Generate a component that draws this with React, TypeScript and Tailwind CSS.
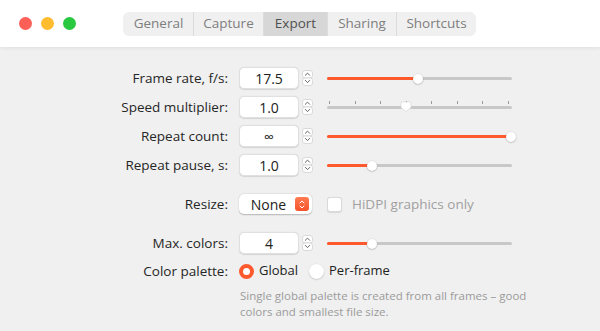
import React from "react";

const font = { fontFamily: '"Open Sans", "Noto Sans", sans-serif' };

function Stepper() {
  return (
    <svg width="11" height="16" viewBox="0 0 11 16" className="ml-[3px]">
      <rect x="0.5" y="0.5" width="10" height="7.5" rx="2.5" fill="#fff" stroke="#d0d0d0" strokeWidth="0.8" />
      <rect x="0.5" y="8" width="10" height="7.5" rx="2.5" fill="#fff" stroke="#d0d0d0" strokeWidth="0.8" />
      <path d="M3.3 5.3 L5.5 3.1 L7.7 5.3" fill="none" stroke="#555" strokeWidth="0.9" strokeLinecap="round" strokeLinejoin="round" />
      <path d="M3.3 10.4 L5.5 12.6 L7.7 10.4" fill="none" stroke="#555" strokeWidth="0.9" strokeLinecap="round" strokeLinejoin="round" />
    </svg>
  );
}

function NumberField({ value }: { value: string }) {
  return (
    <div className="flex items-center">
      <div className="w-[60px] h-[22px] bg-white rounded-[5px] border border-[#e0e0e0] shadow-[0_0.5px_1px_rgba(0,0,0,0.12)] flex items-center justify-center text-[14px] text-[#222]">
        {value}
      </div>
      <Stepper />
    </div>
  );
}

function Slider({ pct, ticks }: { pct: number; ticks?: boolean }) {
  const w = 185;
  const pos = Math.min(pct * w, w - 1);
  return (
    <div className="relative ml-[14px] w-[185px] h-[22px]">
      {ticks && (
        <div className="absolute left-[2px] right-[3px] top-[5px] flex justify-between">
          {Array.from({ length: 8 }).map((_, i) => (
            <div key={i} className="w-px h-[3px] bg-[#9a9a9a]" />
          ))}
        </div>
      )}
      <div className="absolute left-0 right-0 top-[10px] h-[3px] rounded-full bg-[#c8c8c8]" />
      {!ticks && (
        <div className="absolute left-0 top-[10px] h-[3px] rounded-full bg-[#ff5a2e]" style={{ width: pos }} />
      )}
      {ticks ? (
        <svg className="absolute top-[5px]" style={{ left: pos - 6 }} width="12" height="12" viewBox="0 0 12 12">
          <path d="M2 1 H10 Q11 1 11 2 V6.5 L6 10.5 L1 6.5 V2 Q1 1 2 1 Z" fill="#fff" stroke="#d4d4d4" strokeWidth="0.6" />
        </svg>
      ) : (
        <div
          className="absolute top-[6.5px] w-[10px] h-[10px] rounded-full bg-white shadow-[0_0.5px_1.5px_rgba(0,0,0,0.35)]"
          style={{ left: pos - 5 }}
        />
      )}
    </div>
  );
}

function Label({ children }: { children: React.ReactNode }) {
  return <div className="w-[228px] pr-0 text-right text-[13.5px] text-[#262626] mr-[11px]">{children}</div>;
}

export default function App() {
  const tabs = [
    { t: "General", w: 70 },
    { t: "Capture", w: 70 },
    { t: "Export", w: 64 },
    { t: "Sharing", w: 69 },
    { t: "Shortcuts", w: 80 },
  ];
  return (
    <div className="w-[600px] h-[331px] bg-[#f0f0f0] overflow-hidden flex flex-col" style={font}>
      <div className="h-[47px] bg-white relative z-10 shadow-[0_1px_4px_rgba(0,0,0,0.08)] flex items-center">
        <div className="flex items-center gap-[9px] ml-[19px]">
          <div className="w-[13px] h-[13px] rounded-full bg-[#fe5f57]" />
          <div className="w-[13px] h-[13px] rounded-full bg-[#febc2e]" />
          <div className="w-[13px] h-[13px] rounded-full bg-[#28c840]" />
        </div>
        <div className="ml-[47px] flex h-[24px] rounded-[6px] bg-[#f0f0f0] overflow-hidden">
          {tabs.map((tab, i) => (
            <div
              key={tab.t}
              className={
                "flex items-center justify-center text-[13.5px] border-l " +
                (i === 0 ? "border-transparent " : "border-[#dcdcdc] ") +
                (tab.t === "Export" ? "bg-[#d7d7d7] text-[#505050]" : "text-[#7e7e7e]")
              }
              style={{ width: tab.w }}
            >
              {tab.t}
            </div>
          ))}
        </div>
      </div>

      <div className="flex flex-col pt-[20px]">
        <div className="flex flex-col gap-[7px]">
          <div className="flex items-center h-[22px]">
            <Label>Frame rate, f/s:</Label>
            <NumberField value="17.5" />
            <Slider pct={0.492} />
          </div>
          <div className="flex items-center h-[22px]">
            <Label>Speed multiplier:</Label>
            <NumberField value="1.0" />
            <Slider pct={0.427} ticks />
          </div>
          <div className="flex items-center h-[22px]">
            <Label>Repeat count:</Label>
            <NumberField value="∞" />
            <Slider pct={1} />
          </div>
          <div className="flex items-center h-[22px]">
            <Label>Repeat pause, s:</Label>
            <NumberField value="1.0" />
            <Slider pct={0.243} />
          </div>
        </div>

        <div className="flex items-center h-[20px] mt-[18px]">
          <Label>Resize:</Label>
          <div className="w-[73px] h-[20px] bg-white rounded-[5px] shadow-[0_0.5px_1.5px_rgba(0,0,0,0.25)] flex items-center">
            <div className="flex-1 text-center text-[14px] text-[#222] pl-[3px]">None</div>
            <div className="w-[14px] h-[14px] mr-[3px] rounded-[3px] bg-gradient-to-b from-[#ff7a50] to-[#f5522a] flex items-center justify-center">
              <svg width="8" height="11" viewBox="0 0 8 11">
                <path d="M2 4 L4 2 L6 4" fill="none" stroke="#fff" strokeWidth="1" strokeLinecap="round" strokeLinejoin="round" />
                <path d="M2 7 L4 9 L6 7" fill="none" stroke="#fff" strokeWidth="1" strokeLinecap="round" strokeLinejoin="round" />
              </svg>
            </div>
          </div>
          <div className="ml-[15px] w-[15px] h-[15px] bg-white rounded-[3px] border border-[#dadada] shadow-[0_0.5px_1px_rgba(0,0,0,0.1)]" />
          <div className="ml-[10px] text-[13.5px] text-[#a0a0a0]">HiDPI graphics only</div>
        </div>

        <div className="flex items-center h-[22px] mt-[18px]">
          <Label>Max. colors:</Label>
          <NumberField value="4" />
          <Slider pct={0.243} />
        </div>

        <div className="flex items-center h-[18px] mt-[8px]">
          <Label>Color palette:</Label>
          <div className="w-[15px] h-[15px] rounded-full border-[4px] border-[#ff5a2e] bg-white" />
          <div className="ml-[5px] text-[13px] text-[#222]">Global</div>
          <div className="ml-[11px] w-[15px] h-[15px] rounded-full bg-white shadow-[0_0.5px_1.5px_rgba(0,0,0,0.25)]" />
          <div className="ml-[5px] text-[13px] text-[#222]">Per-frame</div>
        </div>

        <div className="ml-[240px] mt-[8px] w-[300px] text-[11.5px] leading-[16px] text-[#9b9b9b]">
          Single global palette is created from all frames – good colors and smallest file size.
        </div>
      </div>
    </div>
  );
}
